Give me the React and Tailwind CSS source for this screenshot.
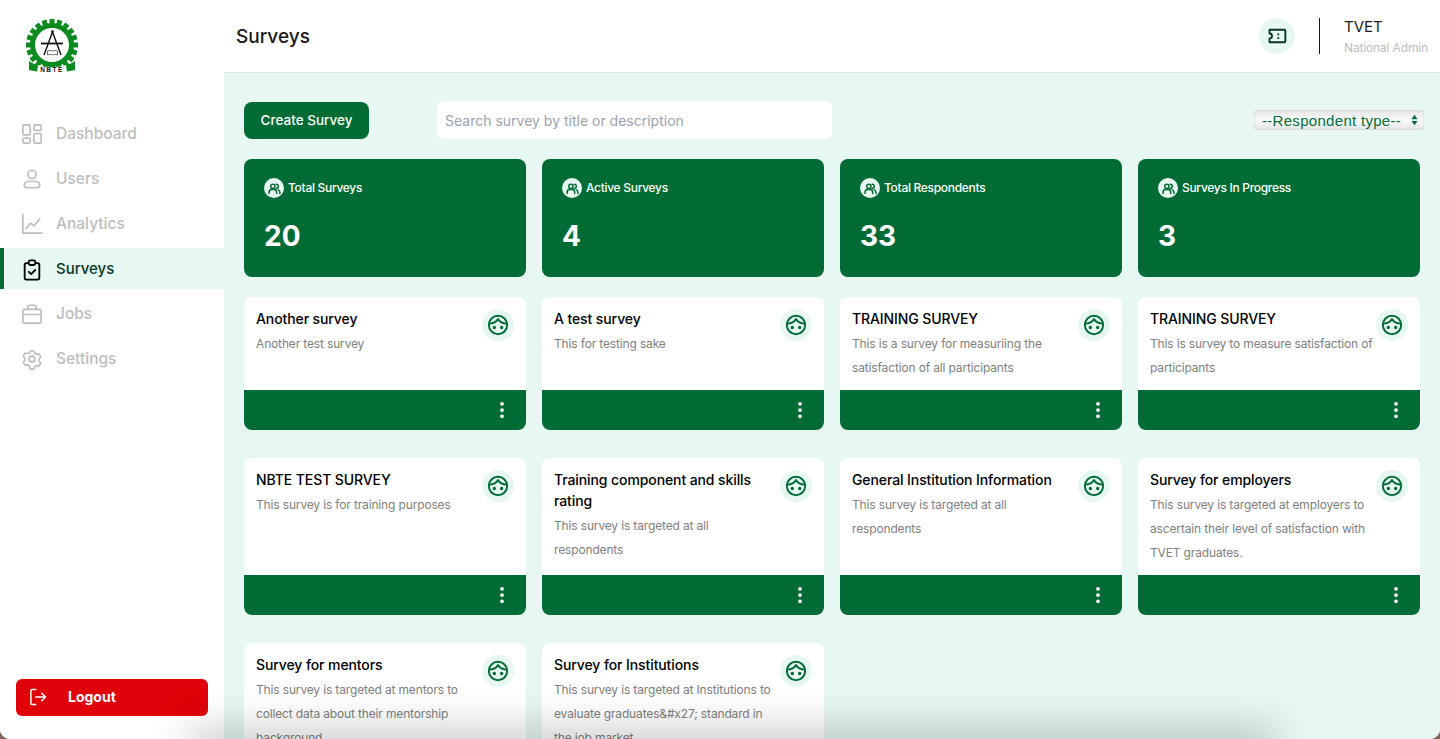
import React from "react";
import { BsThreeDotsVertical } from "react-icons/bs";

const stats = [
  { label: "Total Surveys", value: "20" },
  { label: "Active Surveys", value: "4" },
  { label: "Total Respondents", value: "33" },
  { label: "Surveys In Progress", value: "3" },
];

const surveys = [
  { title: "Another survey", text: "Another test survey" },
  { title: "A test survey", text: "This for testing sake" },
  { title: "TRAINING SURVEY", text: "This is a survey for measuriing the satisfaction of all participants" },
  { title: "TRAINING SURVEY", text: "This is survey to measure satisfaction of participants" },
  { title: "NBTE TEST SURVEY", text: "This survey is for training purposes" },
  { title: "Training component and skills rating", text: "This survey is targeted at all respondents" },
  { title: "General Institution Information", text: "This survey is targeted at all respondents" },
  { title: "Survey for employers", text: "This survey is targeted at employers to ascertain their level of satisfaction with TVET graduates." },
  { title: "Survey for mentors", text: "This survey is targeted at mentors to collect data about their mentorship background" },
  { title: "Survey for Institutions", text: "This survey is targeted at Institutions to evaluate graduates&#x27; standard in the job market" },
];

function NavIcon({ name }) {
  const common = { width: 22, height: 22, viewBox: "0 0 24 24", fill: "none", stroke: "currentColor", strokeWidth: 1.8, strokeLinecap: "round", strokeLinejoin: "round" };
  if (name === "Dashboard")
    return (
      <svg {...common}>
        <rect x="2" y="2" width="8" height="11" rx="1.500" />
        <rect x="14" y="2" width="8" height="6" rx="1.500" />
        <rect x="2" y="16.500" width="8" height="5.500" rx="1.500" />
        <rect x="14" y="11.500" width="8" height="10.500" rx="1.500" />
      </svg>
    );
  if (name === "Users")
    return (
      <svg {...common}>
        <circle cx="12" cy="7" r="4.500" />
        <path d="M12 14.500c-5 0-8.500 1.700-8.500 4 0 1.800 1.400 3 3 3h11c1.600 0 3-1.200 3-3 0-2.300-3.500-4-8.500-4z" />
      </svg>
    );
  if (name === "Analytics")
    return (
      <svg {...common}>
        <path d="M2 1.500v20.500h21" />
        <path d="M5.500 17l5-6 3.500 3 6.500-7.500" />
      </svg>
    );
  if (name === "Surveys")
    return (
      <svg {...common} strokeWidth={2}>
        <rect x="4" y="4.500" width="16" height="18" rx="2" />
        <rect x="8.500" y="1.500" width="7" height="5" rx="1.500" fill="#e7f7f2" />
        <path d="M8.500 14l2.500 2.500 4.500-4.500" />
      </svg>
    );
  if (name === "Jobs")
    return (
      <svg {...common}>
        <rect x="2" y="7" width="20" height="15" rx="2" />
        <path d="M7.500 7V4.500a2 2 0 0 1 2-2h5a2 2 0 0 1 2 2V7" />
        <path d="M2 12.500h20" />
      </svg>
    );
  return (
    <svg {...common}>
      <circle cx="12" cy="12" r="3.200" />
      <path d="M9.700 2.800h4.600l.7 2.800 2.400 1.400 2.800-.8 2.300 4-2.100 2 0 2.800 2.100 2-2.300 4-2.800-.8-2.400 1.400-.7 2.800H9.700L9 20.600l-2.400-1.400-2.800.8-2.300-4 2.100-2v-2.800l-2.100-2 2.300-4 2.800.8L9 5.600z" transform="translate(12 12) scale(.92) translate(-12 -12.400)" />
    </svg>
  );
}

function Logo() {
  const teeth = Array.from({ length: 20 }, (_, i) => i * 18);
  return (
    <svg width="54" height="58" viewBox="0 0 54 58">
      {teeth.map((a) => (
        <rect key={a} x="24.500" y="1" width="5" height="7" fill="#0a8a1f" transform={`rotate(${a} 27 27)`} />
      ))}
      <circle cx="27" cy="27" r="22" fill="#0a8a1f" />
      <circle cx="27" cy="27" r="17" fill="#fff" />
      <circle cx="27.500" cy="13.500" r="1.300" fill="#111" />
      <path d="M27.500 14L19 37M27.500 14L36 37" stroke="#111" strokeWidth="1.400" fill="none" />
      <path d="M16 25.500H38" stroke="#111" strokeWidth="1.800" fill="none" />
      <path d="M22.500 33c2-.8 3.500-.8 5 0 1.500-.8 3-.8 5 0v4c-2-.8-3.500-.8-5 0-1.500-.8-3-.8-5 0z" stroke="#333" strokeWidth=".7" fill="none" />
      <path d="M4 43c6 4 14 6 23 6s17-2 23-6v9c-6 1-15 3-23 3S10 53 4 52z" fill="#0a8a1f" />
      <path d="M13 47c9 3 19 3 28 0l1 7c-10 3-20 3-30 0z" fill="#fff" />
      <text x="27" y="54" textAnchor="middle" fontSize="6.500" fontWeight="700" letterSpacing="1.500" fill="#111" fontFamily="Liberation Sans, sans-serif">NBTE</text>
    </svg>
  );
}

function KidIcon() {
  return (
    <svg width="22" height="22" viewBox="0 0 24 24" fill="none" stroke="#006b35" strokeWidth="2.100" strokeLinecap="round" strokeLinejoin="round">
      <circle cx="12" cy="12" r="10" />
      <path d="M2.500 10.500C6.500 10.500 10 9 12 5.500C14 9 17.500 10.500 21.500 10.500" />
      <circle cx="8" cy="14.700" r=".8" fill="#006b35" />
      <circle cx="16" cy="14.700" r=".8" fill="#006b35" />
    </svg>
  );
}

function SurveyCard({ title, text }) {
  return (
    <div className="flex flex-col rounded-lg bg-white">
      <div className="flex flex-1 justify-between px-3 pt-3 pb-[10px]">
        <div className="-mt-px w-[228px]">
          <h3 className="mb-[3px] text-sm leading-[21px] font-medium tracking-[-0.1px] text-black">{title}</h3>
          <p className="text-xs leading-6 tracking-[-0.15px] text-[#808080]">{text}</p>
        </div>
        <div className="flex h-8 w-8 shrink-0 items-center justify-center rounded-full bg-[#e7f7f2]">
          <KidIcon />
        </div>
      </div>
      <div className="flex h-10 items-center justify-end rounded-b-lg bg-[#006b35] pr-[14px] text-white">
        <BsThreeDotsVertical size={20} />
      </div>
    </div>
  );
}

export default function App() {
  const nav = ["Dashboard", "Users", "Analytics", "Surveys", "Jobs", "Settings"];
  return (
    <div className="h-screen overflow-hidden bg-[#85675a] font-['Inter',sans-serif]">
      <div className="relative flex h-full overflow-hidden rounded-b-[10px] bg-white">
        <aside className="flex w-[224px] shrink-0 flex-col bg-white">
          <div className="pt-[18px] pl-[25px]">
            <Logo />
          </div>
          <nav className="mt-[37px] flex flex-col gap-1">
            {nav.map((item) =>
              item === "Surveys" ? (
                <div key={item} className="flex h-[41px] items-center gap-[13px] border-l-4 border-[#006b35] bg-[#e7f7f2] pt-[2px] pl-[17px] text-[15px] font-medium text-[#06361f]">
                  <span className="text-black"><NavIcon name={item} /></span>
                  {item}
                </div>
              ) : (
                <div key={item} className="flex h-[41px] items-center gap-[13px] pl-[21px] text-[15.500px] font-medium text-[#bdbdbd]">
                  <NavIcon name={item} />
                  {item}
                </div>
              )
            )}
          </nav>
          <button className="mx-4 mt-auto mb-[23px] flex h-[37px] items-center gap-[21px] rounded-md bg-[#e00009] pb-px pl-[13px] text-sm font-bold text-white">
            <svg width="18" height="18" viewBox="0 0 24 24" fill="none" stroke="currentColor" strokeWidth="2" strokeLinecap="round" strokeLinejoin="round">
              <path d="M9 2H4a1.500 1.500 0 0 0-1.500 1.500v17A1.500 1.500 0 0 0 4 22h5" />
              <path d="M9 12h13M17 7l5 5-5 5" />
            </svg>
            Logout
          </button>
        </aside>

        <div className="flex min-w-0 flex-1 flex-col">
          <header className="flex h-[73px] shrink-0 items-center border-b border-[#dfe5e2] bg-white px-3">
            <h1 className="pt-[2px] text-[19px] font-medium text-[#1a1a1a]">Surveys</h1>
            <div className="ml-auto flex h-9 w-9 items-center justify-center rounded-full bg-[#e7f7f2]">
              <svg width="20" height="20" viewBox="0 0 24 24" fill="none" stroke="#06361f" strokeWidth="2.200" strokeLinejoin="round">
                <path d="M3 4.500h18a1 1 0 0 1 1 1v13a1 1 0 0 1-1 1H3v-4.500a3 3 0 0 0 0-6z" />
                <path d="M13.500 9v2M13.500 13.500v2" />
              </svg>
            </div>
            <div className="ml-6 h-9 w-px bg-[#1a1a1a]" />
            <div className="ml-6 w-[84px]">
              <div className="text-[15px] leading-5 text-[#1a1a1a]">TVET</div>
              <div className="mt-[3px] text-xs leading-4 tracking-[-0.15px] whitespace-nowrap text-[#bdbdbd]">National Admin</div>
            </div>
          </header>

          <main className="min-h-0 flex-1 overflow-hidden bg-[#e7f7f2] px-5 pt-7">
            <div className="flex items-center">
              <button className="h-[37px] w-[125px] rounded-lg bg-[#006b35] pt-px text-[13.500px] font-medium text-white">Create Survey</button>
              <input
                className="ml-[68px] h-[38px] w-[395px] rounded-md bg-white px-2 text-sm outline-none placeholder:text-[#9ca3af]"
                placeholder="Search survey by title or description"
              />
              <div className="relative ml-auto -mr-1">
                <select className="block h-5 w-[170px] appearance-none rounded-[4px] bg-gradient-to-b from-[#e4e4e4] via-[#fbfbfb] to-[#e4e4e4] pl-2 font-['Liberation_Sans',sans-serif] text-[15px] tracking-[0.3px] text-[#00703a] shadow-[inset_0_0_2px_#bbb] outline-none">
                  <option>--Respondent type--</option>
                </select>
                <svg className="absolute top-[4px] right-[6px]" width="7" height="12" viewBox="0 0 8 12" fill="#00703a">
                  <path d="M4 0l3.500 5H.5zM4 12L.5 7h7z" />
                </svg>
              </div>
            </div>

            <div className="mt-5 grid grid-cols-4 gap-4">
              {stats.map((s) => (
                <div key={s.label} className="h-[118px] rounded-lg bg-[#006b35] px-5 pt-[19px] text-white">
                  <div className="flex items-center gap-1 text-xs font-medium tracking-[-0.3px]">
                    <span className="flex h-5 w-5 items-center justify-center rounded-full bg-[#e7f7f2]">
                      <svg width="13" height="13" viewBox="0 0 24 24" fill="none" stroke="#006b35" strokeWidth="2.800" strokeLinecap="round">
                        <circle cx="9" cy="8" r="4" />
                        <path d="M2 21v-2a5 5 0 0 1 5-5h4a5 5 0 0 1 5 5v2M15 4a4 4 0 0 1 0 8M22 21v-2a5 5 0 0 0-3-4.500" />
                      </svg>
                    </span>
                    {s.label}
                  </div>
                  <div className="mt-[17px] text-[28px] leading-[42px] font-bold">{s.value}</div>
                </div>
              ))}
            </div>

            <div className="mt-5 grid grid-cols-4 gap-x-4 gap-y-7">
              {surveys.map((s, i) => (
                <SurveyCard key={i} title={s.title} text={s.text} />
              ))}
            </div>
          </main>
        </div>

        {/* window shadow bleeding in from below the screenshot */}
        <div className="pointer-events-none absolute right-[165px] -bottom-[22px] left-[190px] h-[30px] bg-black/25 blur-[20px]" />
      </div>
    </div>
  );
}
